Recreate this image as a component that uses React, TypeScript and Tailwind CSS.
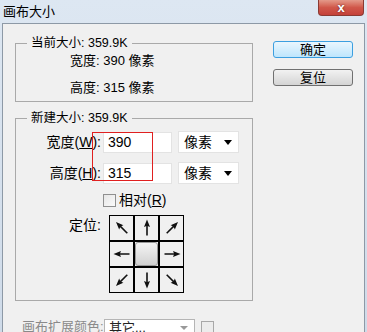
import React from 'react'

const font = { fontFamily: '"Liberation Sans", "Noto Sans CJK SC", sans-serif' }

function Arrow({ angle }: { angle: number }) {
  return (
    <svg width="18" height="18" viewBox="0 0 18 18" style={{ transform: `rotate(${angle}deg)` }}>
      <line x1="9" y1="16.5" x2="9" y2="5" stroke="#111" strokeWidth="1.6" />
      <polygon points="9,0.5 6,8 9,6.8 12,8" fill="#111" />
    </svg>
  )
}

function AnchorGrid() {
  const angles: (number | null)[] = [-45, 0, 45, -90, null, 90, -135, 180, 135]
  return (
    <div className="grid grid-cols-3 w-[75px]">
      {angles.map((a, i) => (
        <div key={i} className="w-[25px] h-[26px] border border-black bg-[#f0f0f0] flex items-center justify-center">
          {a === null ? (
            <div className="w-[23px] h-[24px] rounded-[3px] border border-[#9a9a9a] bg-gradient-to-b from-[#f4f4f4] to-[#d2d2d2]" />
          ) : (
            <Arrow angle={a} />
          )}
        </div>
      ))}
    </div>
  )
}

function Select({ value, w }: { value: string; w: string }) {
  return (
    <div className={`${w} h-[22px] bg-white border border-[#e3e3e3] flex items-center justify-between pl-[5px] pr-[6px]`}>
      <span className="text-[14px]">{value}</span>
      <span className="w-0 h-0 border-l-[4px] border-r-[4px] border-t-[5px] border-l-transparent border-r-transparent border-t-black" />
    </div>
  )
}

export default function App() {
  return (
    <div className="w-[367px] h-[332px] overflow-hidden flex flex-col bg-gradient-to-b from-[#dde7f2] to-[#cfdbe9] text-[13px] text-black" style={font}>
      <div className="h-[23px] shrink-0 flex items-start justify-between pl-[3px] pr-[3px]">
        <span className="text-[13px] leading-[14px] mt-[5px]">画布大小</span>
        <div className="w-[46px] h-[16px] rounded-b-[4px] border border-t-0 border-[#8a3a33] bg-gradient-to-b from-[#e3998a] via-[#d0574a] to-[#c4413a] flex items-center justify-center">
          <span className="text-white font-bold text-[13px] leading-[13px]" style={{ textShadow: '0 0 2px #5a1a14' }}>x</span>
        </div>
      </div>
      <div className="flex-1 ml-[2px] mr-[2px] border-l border-t border-r border-[#8d99a6] bg-[#f0f0f0] flex pl-[12px]">
        <div className="w-[238px] flex flex-col">
          <fieldset className="mt-[11px] border border-[#a9a9a9] pb-[3px]">
            <legend className="ml-[11px] px-[4px] h-[16px] leading-[16px] text-[12.5px]">当前大小: 359.9K</legend>
            <div className="h-[20px] flex items-center pl-[54px]">宽度: 390 像素</div>
            <div className="h-[20px] mt-[7px] flex items-center pl-[54px]">高度: 315 像素</div>
          </fieldset>
          <fieldset className="mt-[8px] border border-[#a9a9a9] pb-[7px]">
            <legend className="ml-[11px] px-[4px] h-[16px] leading-[16px] text-[12.5px]">新建大小: 359.9K</legend>
            <div className="relative mt-[5px] flex flex-col gap-[9px]">
              <div className="flex items-center">
                <span className="w-[85px] text-right text-[14px]">宽度(<span className="underline">W</span>):</span>
                <div className="ml-[2px] w-[69px] h-[21px] bg-white border border-[#e3e3e3] flex items-center pl-[4px] text-[14px]">390</div>
                <div className="ml-[6px]"><Select value="像素" w="w-[61px]" /></div>
              </div>
              <div className="flex items-center">
                <span className="w-[85px] text-right text-[14px]">高度(<span className="underline">H</span>):</span>
                <div className="ml-[2px] w-[69px] h-[21px] bg-white border border-[#e3e3e3] flex items-center pl-[4px] text-[14px]">315</div>
                <div className="ml-[6px]"><Select value="像素" w="w-[61px]" /></div>
              </div>
              <div className="absolute left-[76px] top-[1px] w-[61px] h-[49px] border border-[#e02020]" />
            </div>
            <div className="mt-[9px] flex items-center pl-[87px]">
              <span className="w-[13px] h-[13px] border border-[#8f8f8f] bg-gradient-to-br from-[#e6e6e6] to-[#fafafa]" />
              <span className="ml-[3px] text-[14px] leading-[14px]">相对(<span className="underline">R</span>)</span>
            </div>
            <div className="mt-[8px] flex items-start">
              <span className="w-[85px] text-right text-[14px]">定位:</span>
              <div className="ml-[8px]"><AnchorGrid /></div>
            </div>
          </fieldset>
          <div className="mt-[18px] flex items-start pl-[7px] text-[#8a8a8a]">
            <span className="text-[13px] leading-[16px] w-[82px]">画布扩展颜色:</span>
            <div className="w-[91px] h-[22px] border border-[#b5b5b5] bg-white flex items-start justify-between pl-[4px] pr-[6px]">
              <span className="text-[13px] leading-[16px] text-[#222]">其它...</span>
              <span className="mt-[6px] w-0 h-0 border-l-[4px] border-r-[4px] border-t-[4px] border-l-transparent border-r-transparent border-t-[#999]" />
            </div>
            <div className="ml-[6px] mt-[2px] w-[13px] h-[14px] border border-[#a8a8a8] bg-[#ececec]" />
          </div>
        </div>
        <div className="ml-[20px] mt-[17px] flex flex-col gap-[11px]">
          <button className="w-[80px] h-[17px] rounded-[3px] border border-[#3c9fe0] bg-gradient-to-b from-[#eaf6fd] to-[#bee6fd] flex items-center justify-center text-[13px] leading-[13px]">确定</button>
          <button className="w-[80px] h-[17px] rounded-[3px] border border-[#707070] bg-gradient-to-b from-[#f2f2f2] to-[#d4d4d4] flex items-center justify-center text-[13px] leading-[13px]">复位</button>
        </div>
      </div>
    </div>
  )
}
